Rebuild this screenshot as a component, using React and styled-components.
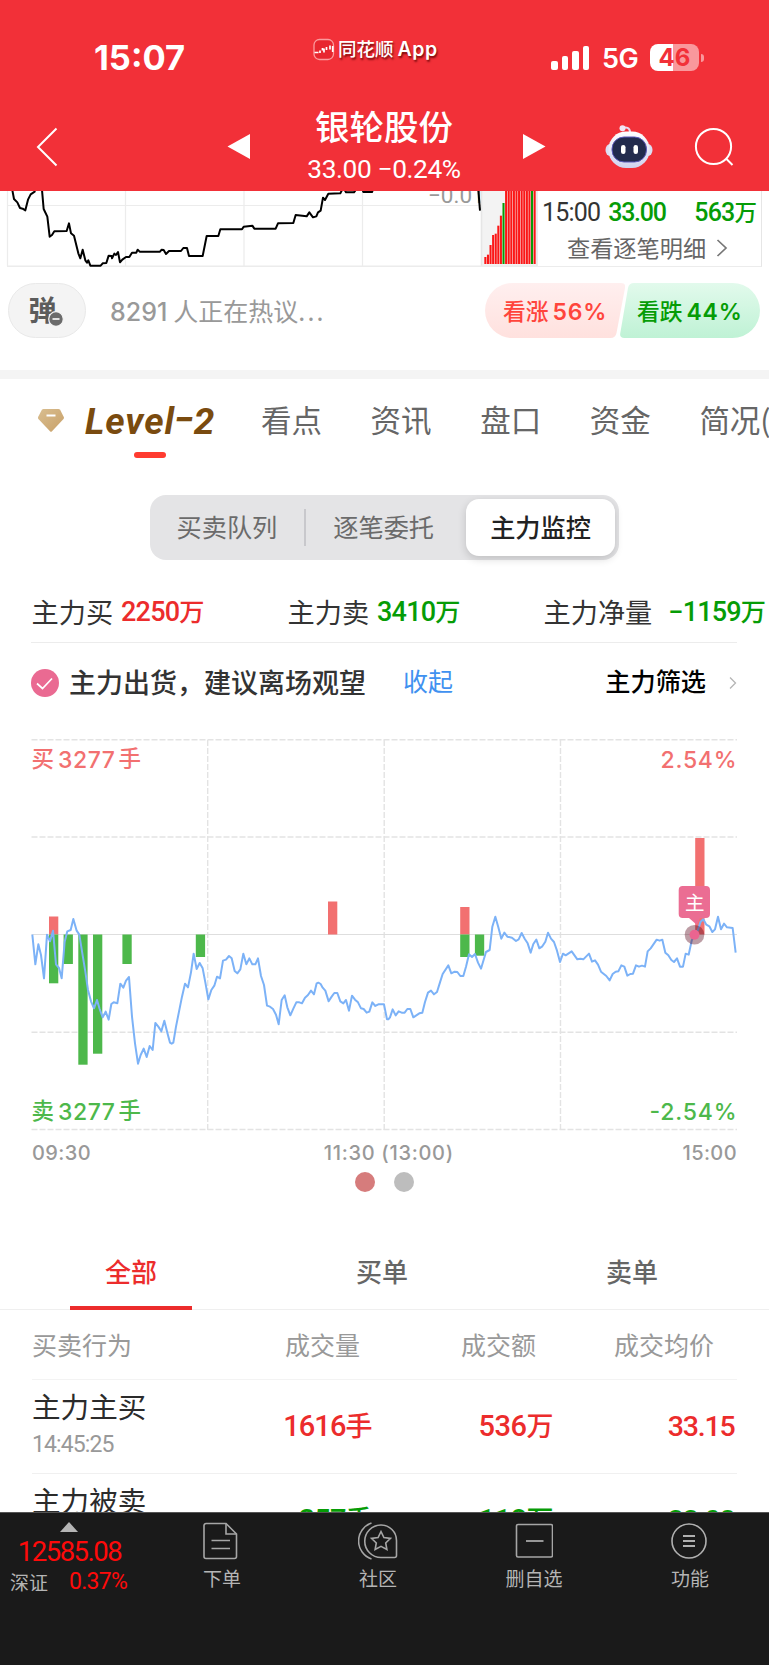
import React from 'react'
import styled, { createGlobalStyle } from 'styled-components'

const cjk = '"Noto Sans CJK SC", sans-serif'
const RED = '#f23038'
const UP = '#ec2c2c'
const DOWN = '#069c06'

const topTabs = ['看点', '资讯', '盘口', '资金', '简况(']

const summary = [
  { label: '主力买', value: '2250', unit: '万', color: UP, gap: 8, width: 256 },
  { label: '主力卖', value: '3410', unit: '万', color: DOWN, gap: 8, width: 256 },
  { label: '主力净量', value: '−1159', unit: '万', color: DOWN, gap: 16, width: 260 },
]

const orders = [
  { name: '主力主买', time: '14:45:25', volume: '1616', amount: '536', price: '33.15', color: UP },
  { name: '主力被卖', volume: '357', amount: '118', price: '33.08', color: DOWN },
]

// x, top, bottom, color
const flowBars = [
  [49, 916.5, 934.5, '#f27070'],
  [49, 934.5, 983.3, '#4db84b'],
  [63.6, 934.5, 964, '#4db84b'],
  [78.3, 934.5, 1064.7, '#4db84b'],
  [93, 934.5, 1053.7, '#4db84b'],
  [122.4, 934.5, 964, '#4db84b'],
  [195.8, 934.5, 957, '#4db84b'],
  [328, 901.5, 934.5, '#f27070'],
  [460.2, 907, 934.5, '#f27070'],
  [460.2, 934.5, 957, '#4db84b'],
  [474.9, 934.5, 955.7, '#4db84b'],
  [695.2, 838, 934.5, '#f27070'],
]

const flowLine = '97,104 106,193 115,133 123,165 132,235 141,104 150,124 159,92 168,193 177,204 185,235 194,125 202,94 212,90 220,57 230,92 238,104 247,160 256,215 264,270 273,304 282,325 291,300 299,327 308,352 317,335 326,359 334,312 341,307 352,310 361,251 370,263 378,242 387,231 396,350 405,430 414,491 422,465 431,446 440,471 449,438 458,450 466,369 475,380 484,394 493,362 502,398 510,428 515,431 520,428 528,380 537,335 546,290 555,251 564,262 573,217 581,161 590,207 599,189 608,205 616,247 625,298 634,270 643,257 651,230 660,235 669,182 678,179 687,168 695,175 704,213 712,220 721,208 730,161 739,193 748,175 757,193 766,193 774,175 783,228 792,255 801,317 810,320 819,327 828,344 836,373 845,300 854,286 862,322 871,346 880,326 889,307 898,307 906,310 915,293 924,285 933,272 942,283 950,250 955,248 962,252 968,263 976,272 986,304 995,290 1003,279 1012,279 1021,304 1030,310 1038,300 1047,332 1056,287 1065,299 1074,307 1083,325 1091,327 1100,338 1108,335 1117,307 1126,318 1135,313 1152,313 1161,358 1165,358 1170,352 1178,328 1187,346 1196,334 1205,338 1214,338 1222,327 1231,327 1240,352 1249,346 1258,340 1267,338 1275,306 1284,278 1293,272 1302,283 1311,276 1320,247 1328,222 1345,196 1354,220 1364,215 1372,216 1381,228 1390,228 1398,200 1407,163 1416,171 1425,162 1434,188 1443,206 1458,156 1469,150 1477,80 1486,50 1495,82 1504,116 1513,98 1522,110 1536,113 1548,123 1556,118 1565,99 1574,116 1583,130 1592,158 1600,132 1609,119 1618,145 1627,139 1636,125 1644,98 1653,116 1662,126 1671,152 1680,186 1689,161 1697,166 1715,154 1732,178 1741,176 1750,178 1767,161 1776,185 1785,181 1794,194 1803,215 1819,228 1829,241 1838,222 1847,215 1855,214 1864,196 1873,200 1882,227 1891,222 1899,221 1908,196 1917,200 1926,197 1935,200 1943,154 1952,145 1970,119 1979,122 1987,119 1996,158 2005,166 2014,180 2022,186 2031,175 2040,200 2049,200 2057,161 2066,164 2075,122 2084,103 2093,92 2102,65 2110,58 2119,74 2128,79 2137,96 2145,88 2154,50 2163,88 2172,71 2181,82 2198,84 2207,158'

const minuteLines = [
  '36,10 42,42 52,52 60,69 68,71 76,76 84,44 92,28 104,20 104,10',
  '126,15 131,72 142,95 149,155 156,150 163,139 200,138 207,115 213,145 222,152 235,205 241,220 248,194 256,226 261,233 265,226 271,242 302,242 308,235 319,234 326,212 335,213 336,220 343,206 348,210 354,201 360,232 367,224 378,216 388,216 396,203 409,203 413,194 419,200 480,200 485,194 491,195 498,207 507,198 543,198 550,189 561,189 567,213 608,213 620,153 655,153 661,133 726,133 731,125 757,122 763,131 827,131 834,115 880,114 887,90 920,94 928,82 939,97 949,94 954,82 962,77 969,38 975,45 985,26 1021,25 1026,15',
  '1034,15 1038,22 1062,22 1067,15',
  '1088,15 1090,21 1116,21 1119,14',
  '1435,15 1440,77',
]

const depthTops = [216, 209, 180, 150, 146, 122, 92, 54, 0, 0, 0, 0, 0, 0, 0, 0, 0, 0, 0, 0]

const MinuteChart = () => (
  <svg width="538" height="76" viewBox="0 191 538 76">
    <path d="M7.5 191V266M125.5 191V266M244 191V266M362.5 191V266M7 205.5H481" stroke="#ececec" strokeWidth="1.2" fill="none" />
    <text x="428" y="203" fontFamily="Roboto" fontSize="22.5" fill="#999">−0.01</text>
    <rect x="481" y="191" width="56" height="75" fill="#f3f3f3" />
    <path d="M481.5 191V267M537 191V267" stroke="#e6e6e6" strokeWidth="1.6" />
    <path d="M7 266.6H538" stroke="#ececec" strokeWidth="2" />
    <g transform="translate(0 185) scale(.33333)">
      {minuteLines.map((points) => (
        <polyline key={points} points={points} fill="none" stroke="#000" strokeWidth="6" strokeLinejoin="round" />
      ))}
      {depthTops.map((top, i) => (
        <rect key={i} x={1453 + i * 7.78} y={top} width="6.2" height={237 - top} fill={i === 7 || i === 18 ? '#069c06' : '#fb1616'} />
      ))}
    </g>
  </svg>
)

const FlowChart = () => (
  <svg width="769" height="400" viewBox="0 735 769 400">
    <g stroke="#e3e3e3" strokeWidth="1.4" strokeDasharray="6 2" fill="none">
      <path d="M31.5 739.7H737M31.5 837H737M31.5 1032.3H737M31.5 1129.5H737" />
      <path d="M207.7 740V1130M384.2 740V1130M560.5 740V1130" />
    </g>
    <path d="M31.5 934.5H737" stroke="#dedede" strokeWidth="1.2" />
    {flowBars.map(([x, top, bottom, color], i) => (
      <rect key={i} x={x} y={top} width="9.3" height={bottom - top} fill={color} />
    ))}
    <polyline points={flowLine} transform="translate(0 900) scale(.33333)" fill="none" stroke="#7cb2f7" strokeWidth="6" strokeLinejoin="round" />
    <circle cx="694.5" cy="934.7" r="9.8" fill="#5a0a1e" fillOpacity=".4" />
    <path d="M682.7 886h23.3a4 4 0 0 1 4 4v24a4 4 0 0 1-4 4h-6l-3 7-8-7h-6.3a4 4 0 0 1-4-4v-24a4 4 0 0 1 4-4z" fill="#eb6d93" />
    <circle cx="694.5" cy="934.7" r="5" fill="#eb6490" />
    <text x="694.8" y="910" textAnchor="middle" fontFamily={cjk} fontSize="19.5" fill="#fff">主</text>
    <g fontFamily={`Inter, ${cjk}`} fontSize="23" fontWeight="500">
      <text x="31.5" y="767" fontSize="22.5" fill="#f27070">买</text>
      <text x="58" y="767.5" fill="#f27070" textLength="57">3277</text>
      <text x="118.5" y="767" fontSize="22.5" fill="#f27070">手</text>
      <text x="736.5" y="767.5" fill="#f27070" textAnchor="end" textLength="76">2.54%</text>
      <text x="31.5" y="1119" fontSize="22.5" fill="#4db84b">卖</text>
      <text x="58" y="1119.5" fill="#4db84b" textLength="57">3277</text>
      <text x="118.5" y="1119" fontSize="22.5" fill="#4db84b">手</text>
      <text x="736.5" y="1119.5" fill="#4db84b" textAnchor="end" textLength="87">-2.54%</text>
    </g>
  </svg>
)

const Robot = () => (
  <svg width="48" height="46" viewBox="0 0 48 46">
    <defs>
      <linearGradient id="shell" x1="0" y1="0" x2="0" y2="1">
        <stop offset="0" stopColor="#fff" />
        <stop offset="1" stopColor="#d0d2ee" />
      </linearGradient>
    </defs>
    <path d="M17 4.5c4-2 8-1 8 4" stroke="#e9d9ef" strokeWidth="2" fill="none" />
    <circle cx="17.5" cy="4.2" r="3" fill="#f2e6f5" />
    <ellipse cx="5" cy="26" rx="4.5" ry="6" fill="#dddef3" />
    <ellipse cx="43" cy="26" rx="4.5" ry="6" fill="#dddef3" />
    <rect x="3.5" y="7.5" width="41" height="36.5" rx="17.5" fill="url(#shell)" />
    <rect x="7" y="13" width="34.5" height="25" rx="12" fill="#222b4d" stroke="#5a58b8" strokeWidth="1" />
    <rect x="16" y="21" width="4.5" height="9" rx="2.2" fill="#fff" />
    <rect x="28.5" y="21" width="4.5" height="9" rx="2.2" fill="#fff" />
  </svg>
)

const OrderIcon = () => (
  <svg width="38" height="38" viewBox="2 0 38 38" fill="none" stroke="#a6a6a6" strokeWidth="1.6">
    <path d="M5 1.5h20L35.5 12v22.5a2 2 0 0 1-2 2H5a2 2 0 0 1-2-2v-31a2 2 0 0 1 2-2z" />
    <path d="M25 1.5V12h10.5M10.5 18.5H29M10.5 26.5H29" />
  </svg>
)

const CommunityIcon = () => (
  <svg width="40" height="38" viewBox="0 0 40 38" fill="none" stroke="#a6a6a6" strokeWidth="1.6">
    <path d="M13.5 1A19 19 0 0 0 13.5 37" />
    <path d="M23 3a16 16 0 1 0 0 32.5h13.5a2 2 0 0 0 2-2V18.5A15.5 15.5 0 0 0 23 3z" />
    <path d="M23 9.5l2.9 6 6.6.9-4.8 4.6 1.2 6.5-5.900-3.100-5.900 3.100 1.200-6.500-4.800-4.600 6.600-.9z" />
  </svg>
)

const RemoveIcon = () => (
  <svg width="38" height="38" viewBox="0 0 38 38" fill="none" stroke="#a6a6a6" strokeWidth="1.6">
    <rect x="1.5" y="2.5" width="36" height="32.5" rx="1.5" />
    <path d="M11 19H28.5" strokeWidth="1.8" />
  </svg>
)

const MoreIcon = () => (
  <svg width="38" height="38" viewBox="0 0 38 38" fill="none" stroke="#b0b0b0" strokeWidth="1.6">
    <circle cx="18" cy="19" r="17" />
    <path d="M12 14h12M12 19h12M12 24h12" strokeWidth="2" />
  </svg>
)

const bottomTabs = [
  { label: '下单', Icon: OrderIcon },
  { label: '社区', Icon: CommunityIcon },
  { label: '删自选', Icon: RemoveIcon },
  { label: '功能', Icon: MoreIcon },
]

const App = () => {
  return (
    <Page>
      <GlobalStyle />

      <Header>
        <StatusBar>
          <Clock>15:07</Clock>
          <AppBadge>
            <svg width="22" height="23" viewBox="0 0 22 23">
              <rect x="1" y="1.5" width="19.5" height="20" rx="5.5" fill="#e8262f" stroke="#fb9a9d" strokeWidth="1.3" />
              <path d="M1.5 14.5h4M7 12.5v2.5M9.5 10v2.5M11 10.5v4M13.5 9v3M17 7.5v4M19.7 8v6" stroke="#fff" strokeWidth="1.7" />
            </svg>
            <span>同花顺<b>App</b></span>
          </AppBadge>
          <Signal>
            <i /><i /><i /><i />
          </Signal>
          <Network>5G</Network>
          <Battery><span>46</span></Battery>
          <BatteryTip />
        </StatusBar>
        <NavBar>
          <svg width="22" height="40" viewBox="0 0 22 40" fill="none" stroke="#fff" strokeWidth="2">
            <path d="M20.5 1.5L2 20l18.5 18.5" />
          </svg>
          <Arrow $left={169} viewBox="0 0 23 26"><path d="M23 0v25L.5 12.5z" fill="#fff" /></Arrow>
          <StockTitle>
            <h1>银轮股份</h1>
            <Num $size={26.3} $space={-0.4}>33.00 −0.24%</Num>
          </StockTitle>
          <Arrow $left={61} viewBox="0 0 23 26"><path d="M0 0v25l22.5-12.5z" fill="#fff" /></Arrow>
          <RobotSlot><Robot /></RobotSlot>
          <svg width="40" height="40" viewBox="0 0 40 40" fill="none" stroke="#fff" strokeWidth="2">
            <circle cx="19.5" cy="19.5" r="17.6" />
            <path d="M32 31.5l6.5 6.5" />
          </svg>
        </NavBar>
      </Header>

      <Content>
        <Strip>
          <MinuteChart />
          <Ticks>
            <TickRow>
              <Num $size={25} $space={-0.8} $color="#333">15:00</Num>
              <Num $size={25} $space={-1.3} $color={DOWN} $weight={500}>33.00</Num>
              <TickAmount><Num $size={25} $space={-0.8} $color={DOWN} $weight={500}>563</Num>万</TickAmount>
            </TickRow>
            <TickLink>
              查看逐笔明细
              <svg width="12" height="20" viewBox="0 0 12 20" fill="none" stroke="#777" strokeWidth="1.7"><path d="M1.5 2l8.5 8-8.5 8" /></svg>
            </TickLink>
          </Ticks>
        </Strip>

        <HotRow>
          <Bullet>
            <span>弹</span>
            <svg width="16" height="16" viewBox="0 0 16 16">
              <circle cx="8" cy="8" r="7.3" fill="#6b6b6b" stroke="#f4f4f4" strokeWidth="1.2" />
              <path d="M4.5 8h7" stroke="#fff" strokeWidth="1.6" />
            </svg>
          </Bullet>
          <HotText><b>8291</b>人正在热议<i>...</i></HotText>
          <Vote $bull>
            <svg width="140" height="55" viewBox="0 0 140 55">
              <defs><linearGradient id="bull" x1="0" y1="0" x2="0" y2="1"><stop offset="0" stopColor="#ffefef" /><stop offset="1" stopColor="#ffe1de" /></linearGradient></defs>
              <path d="M27.5 0H136q5 0 4 5l-8.5 45q-1 5-6 5H27.5a27.5 27.5 0 0 1 0-55z" fill="url(#bull)" />
            </svg>
            <span>看涨<b>56%</b></span>
          </Vote>
          <Vote>
            <svg width="140" height="55" viewBox="0 0 140 55">
              <defs><linearGradient id="bear" x1="0" y1="0" x2="0" y2="1"><stop offset="0" stopColor="#e2faec" /><stop offset="1" stopColor="#bff2d5" /></linearGradient></defs>
              <path d="M112.5 0H14Q9 0 8 5L.3 50q-1 5 4 5h108.2a27.5 27.5 0 0 0 0-55z" fill="url(#bear)" />
            </svg>
            <span>看跌<b>44%</b></span>
          </Vote>
        </HotRow>

        <TopTabs>
          <svg width="28" height="25" viewBox="0 0 28 25">
            <defs><linearGradient id="gem" x1="0" y1="0" x2="1" y2="1"><stop offset="0" stopColor="#d9be90" /><stop offset="1" stopColor="#c8a068" /></linearGradient></defs>
            <path d="M6.5 1h15q1 0 1.6.8l3.7 7.3q.5 1-.3 1.9L15 23.3q-1 1-2 0L1.4 11q-.8-.9-.3-1.9L4.9 1.8Q5.5 1 6.5 1z" fill="url(#gem)" />
            <path d="M9.5 7.5h9" stroke="#fff" strokeWidth="2" />
          </svg>
          <LevelTab>Level<i>−</i>2</LevelTab>
          {topTabs.map((tab) => (
            <TopTab key={tab}>{tab}</TopTab>
          ))}
        </TopTabs>

        <Segments>
          <Segment>买卖队列</Segment>
          <SegmentLine />
          <Segment $second>逐笔委托</Segment>
          <Segment $active>主力监控</Segment>
        </Segments>

        <Summary>
          {summary.map((item) => (
            <SummaryItem key={item.label} $width={item.width}>
              {item.label}
              <Value $gap={item.gap} $color={item.color}>
                <Num $size={27} $space={-0.8} $weight={500}>{item.value}</Num>{item.unit}
              </Value>
            </SummaryItem>
          ))}
        </Summary>

        <Advice>
          <svg width="28" height="28" viewBox="0 0 28 28">
            <circle cx="14" cy="14" r="14" fill="#ea6a92" />
            <path d="M6 14.5l5.5 5L21 9.5" fill="none" stroke="#fff" strokeWidth="1.7" />
          </svg>
          <AdviceText>主力出货，建议离场观望</AdviceText>
          <Collapse>收起</Collapse>
          <Filter>主力筛选</Filter>
          <svg width="8" height="14" viewBox="0 0 8 14" fill="none" stroke="#b5b5b5" strokeWidth="1.3"><path d="M1 1.5l5.5 5.5L1 12.5" /></svg>
        </Advice>

        <FlowChart />
        <TimeAxis>
          <span>09:30</span>
          <span>11:30 (13:00)</span>
          <span>15:00</span>
        </TimeAxis>
        <Dots>
          <Dot $color="#d67c7c" />
          <Dot $color="#bdbdbd" />
        </Dots>

        <OrderTabs>
          <OrderTab $active>全部</OrderTab>
          <OrderTab>买单</OrderTab>
          <OrderTab>卖单</OrderTab>
        </OrderTabs>

        <TableHead>
          <span>买卖行为</span>
          <span>成交量</span>
          <span>成交额</span>
          <span>成交均价</span>
        </TableHead>
        {orders.map((order) => (
          <OrderRow key={order.name}>
            <OrderName>
              {order.name}
              {order.time && <Num $size={23} $space={-0.9} $color="#999">{order.time}</Num>}
            </OrderName>
            <Cell $color={order.color}><Num $size={29} $space={-0.9} $weight={500}>{order.volume}</Num>手</Cell>
            <Cell $color={order.color}><Num $size={29} $space={-0.5} $weight={500}>{order.amount}</Num>万</Cell>
            <Cell $price $color={order.color}><Num $size={28.5} $space={-1.2} $weight={500}>{order.price}</Num></Cell>
          </OrderRow>
        ))}
      </Content>

      <Footer>
        <Quote>
          <svg width="18" height="10" viewBox="0 0 18 10"><path d="M9 0l9 10H0z" fill="#b5b5b5" /></svg>
          <Num $size={27.5} $space={-1.5} $color="#ff0a0a">12585.08</Num>
          <QuoteRow>深证<Num $size={23} $space={-0.7} $color="#ff0a0a">0.37%</Num></QuoteRow>
        </Quote>
        {bottomTabs.map(({ label, Icon }) => (
          <BottomTab key={label}>
            <Icon />
            {label}
          </BottomTab>
        ))}
      </Footer>
    </Page>
  )
}

export default App

const GlobalStyle = createGlobalStyle`
  * {
    box-sizing: border-box;
  }
  body {
    margin: 0;
    background: #fff;
  }
  svg {
    display: block;
    flex-shrink: 0;
  }
`
const Page = styled.div`
  display: flex;
  flex-direction: column;
  width: 769px;
  height: 1665px;
  overflow: hidden;
  background: #fff;
  font-family: ${cjk};
  line-height: 1;
  white-space: nowrap;
  color: #333;
`
const Content = styled.main`
  display: flex;
  flex-direction: column;
  height: 1321px;
  overflow: hidden;

  > * {
    flex-shrink: 0;
  }
`
const Num = styled.span`
  font-family: Roboto, sans-serif;
  font-size: ${(p) => p.$size}px;
  font-weight: ${(p) => p.$weight || 400};
  letter-spacing: ${(p) => p.$space}px;
  color: ${(p) => p.$color || 'inherit'};
`
const Header = styled.header`
  flex-shrink: 0;
  height: 191px;
  background: ${RED};
  color: #fff;
`
const StatusBar = styled.div`
  display: flex;
  align-items: center;
  height: 103px;
  padding: 12px 0 0 94px;
`
const Clock = styled.div`
  width: 219px;
  margin-top: 1px;
  font: 700 34.5px/1 Inter, sans-serif;
`
const AppBadge = styled.div`
  display: flex;
  align-items: center;
  gap: 3px;
  width: 238px;
  margin-top: -16px;
  font-size: 18.5px;
  font-weight: 500;
  text-shadow: 1px 2px 2px rgba(90, 0, 0, 0.8);

  b {
    margin-left: 4px;
    font: 600 19.5px/1 Inter, sans-serif;
    letter-spacing: 0.6px;
  }
`
const Signal = styled.div`
  display: flex;
  align-items: flex-end;
  gap: 4px;
  width: 51px;
  height: 24px;

  i {
    width: 6.5px;
    border-radius: 2px;
    background: #fff;
  }
  i:nth-child(1) { height: 9px; }
  i:nth-child(2) { height: 14px; }
  i:nth-child(3) { height: 19px; }
  i:nth-child(4) { height: 24px; }
`
const Network = styled.div`
  width: 48px;
  margin-top: 2px;
  font: 600 27px/1 Inter, sans-serif;
  letter-spacing: -0.5px;
`
const Battery = styled.div`
  width: 49px;
  height: 27px;
  border-radius: 8px;
  background: linear-gradient(90deg, #fff 47%, #f9989c 47%);
  color: ${RED};
  font: 700 24px/27px Inter, sans-serif;
  text-align: center;
`
const BatteryTip = styled.div`
  width: 3px;
  height: 8px;
  margin-left: 2px;
  border-radius: 0 3px 3px 0;
  background: #f9989c;
`
const NavBar = styled.div`
  display: flex;
  align-items: center;
  height: 88px;
  padding: 0 0 0 36px;
`
const Arrow = styled.svg`
  width: 23px;
  height: 26px;
  margin-left: ${(p) => p.$left}px;
`
const StockTitle = styled.div`
  display: flex;
  flex-direction: column;
  align-items: center;
  width: 156px;
  margin-left: 56px;
  margin-top: -5px;

  h1 {
    margin: 0 0 13px;
    font-size: 34.5px;
    font-weight: 500;
    line-height: 36px;
  }
`
const RobotSlot = styled.div`
  margin: 0 41px 0 59px;
`
const Strip = styled.div`
  display: flex;
  height: 76px;
`
const Ticks = styled.div`
  width: 224px;
  padding: 9px 4px 0 4px;
  border-right: 1.5px solid #e6e6e6;
  border-bottom: 1.5px solid #ececec;
`
const TickRow = styled.div`
  display: flex;
  align-items: baseline;
  gap: 8px;
`
const TickAmount = styled.span`
  margin-left: auto;
  font-size: 22.5px;
  font-weight: 500;
  color: ${DOWN};
`
const TickLink = styled.div`
  display: flex;
  align-items: center;
  gap: 10px;
  margin: 11px 0 0 25px;
  font-size: 23.2px;
  color: #666;
`
const HotRow = styled.div`
  display: flex;
  height: 112px;
  padding: 16px 0 0 8px;
  border-bottom: 9px solid #f4f4f4;
`
const Bullet = styled.div`
  display: flex;
  align-items: center;
  justify-content: center;
  width: 78px;
  height: 55px;
  padding-right: 7px;
  border: 1.5px solid #e9e9e9;
  border-radius: 28px;
  background: #f4f4f4;
  font-size: 28px;
  font-weight: 700;
  color: #5c5c5c;

  span {
    margin-top: -4px;
  }
  svg {
    margin: 17px -5px 0 -9px;
  }
`
const HotText = styled.div`
  width: 375px;
  margin-left: 24px;
  font-size: 25px;
  line-height: 54px;
  color: #999;

  b {
    margin-right: 6px;
    font: 500 25px/1 Inter, sans-serif;
  }
  i {
    font-style: normal;
    letter-spacing: 2.2px;
  }
`
const Vote = styled.div`
  display: grid;
  width: 140px;
  height: 55px;
  margin-left: ${(p) => (p.$bull ? 0 : -5)}px;
  font-size: 22.8px;
  font-weight: 500;
  line-height: 55px;
  color: ${(p) => (p.$bull ? '#ff453c' : DOWN)};

  > * {
    grid-area: 1 / 1;
  }
  span {
    padding-left: ${(p) => (p.$bull ? 18 : 17)}px;
  }
  b {
    margin-left: 4px;
    font: 600 23px/1 Inter, sans-serif;
    letter-spacing: 0.7px;
  }
`
const TopTabs = styled.nav`
  display: flex;
  height: 116px;
  padding: 0 0 0 37px;

  > svg {
    margin-top: 29px;
  }
`
const LevelTab = styled.div`
  flex-shrink: 0;
  width: 134px;
  height: 79px;
  margin: 0 42px 0 20px;
  font: italic 700 37px/86px Roboto, sans-serif;
  letter-spacing: 0.9px;
  color: #7a4b0f;

  i {
    display: inline-block;
    transform: translateY(-2px);
    margin: 0 -1px;
  }
  &::after {
    content: '';
    display: block;
    width: 32px;
    height: 6px;
    margin: -13px 0 0 49px;
    border-radius: 3px;
    background: #ff3b30;
  }
`
const TopTab = styled.div`
  flex-shrink: 0;
  margin-right: 48.6px;
  font-size: 30.5px;
  line-height: 81px;
  color: #666;
`
const Segments = styled.div`
  display: flex;
  align-items: center;
  align-self: flex-start;
  width: 469px;
  height: 65px;
  margin-left: 150px;
  padding-left: 26.5px;
  border-radius: 16px;
  background: #e4e4e6;
`
const SegmentLine = styled.div`
  width: 2px;
  height: 37px;
  margin-left: 27px;
  background: #c8c8cc;
`
const Segment = styled.div`
  margin-top: -2px;
  margin-left: ${(p) => (p.$second ? 27 : 0)}px;
  font-size: 25.2px;
  color: #6b6b6b;

  ${(p) => p.$active && `
    width: 149px;
    height: 57px;
    margin-top: 0;
    margin-left: 32px;
    border-radius: 13px;
    background: #fff;
    box-shadow: 0 3px 8px rgba(0, 0, 0, 0.16);
    color: #222;
    font-weight: 500;
    line-height: 54px;
    text-align: center;
  `}
`
const Summary = styled.div`
  display: flex;
  height: 83px;
  margin: 0 0 0 31px;
  padding: 38px 0 0 0.5px;
  background: linear-gradient(#ececec, #ececec) 0 100% / 706px 1.5px no-repeat;
`
const SummaryItem = styled.div`
  display: flex;
  flex-shrink: 0;
  width: ${(p) => p.$width}px;
  font-size: 27.2px;
`
const Value = styled.div`
  margin: 0 0 0 ${(p) => p.$gap}px;
  font-size: 25.2px;
  font-weight: 500;
  color: ${(p) => p.$color};
`
const Advice = styled.div`
  display: flex;
  align-items: center;
  height: 79px;
  padding: 0 32px 0 31px;
  margin-bottom: 13px;
`
const AdviceText = styled.div`
  width: 334px;
  margin: -3px 0 0 10px;
  font-size: 27px;
  font-weight: 500;
`
const Collapse = styled.div`
  margin-top: -4px;
  font-size: 25px;
  color: #4091f0;
`
const Filter = styled.div`
  margin: -3px 23px 0 auto;
  font-size: 25.2px;
  font-weight: 500;
  color: #000;
`
const TimeAxis = styled.div`
  display: flex;
  justify-content: space-between;
  height: 37px;
  padding: 8px 32px 0;
  font: 500 20px/20px Inter, sans-serif;
  letter-spacing: 0.4px;
  color: #999;

  span:nth-child(2) {
    margin-left: 4px;
    letter-spacing: 0.7px;
  }
`
const Dots = styled.div`
  display: flex;
  justify-content: center;
  gap: 19px;
  height: 54px;
`
const Dot = styled.div`
  width: 20px;
  height: 20px;
  border-radius: 50%;
  background: ${(p) => p.$color};
`
const OrderTabs = styled.div`
  display: grid;
  grid-template-columns: 262px 240px 260px;
  height: 84px;
  border-bottom: 1.5px solid #efefef;
`
const OrderTab = styled.div`
  font-size: 26px;
  font-weight: 500;
  line-height: 89px;
  text-align: center;
  color: ${(p) => (p.$active ? UP : '#666')};

  &::after {
    content: '';
    display: ${(p) => (p.$active ? 'block' : 'none')};
    width: 122px;
    height: 4px;
    margin: -9px auto 0;
    background: ${UP};
  }
`
const TableHead = styled.div`
  display: grid;
  grid-template-columns: 253px 176px 153px 123px;
  height: 70px;
  margin: 0 32px;
  border-bottom: 1.5px solid #f3f3f3;
  font-size: 25px;
  line-height: 69px;
  color: #999;
`
const OrderRow = styled.div`
  display: grid;
  grid-template-columns: 160px 180.5px 181px 183px;
  height: 94px;
  margin: 0 32px;
  border-bottom: 1.5px solid #f0f0f0;
`
const OrderName = styled.div`
  display: flex;
  flex-direction: column;
  gap: 12px;
  padding-top: 12px;
  font-size: 28.6px;
  color: #2b2b2b;
`
const Cell = styled.div`
  padding-right: ${(p) => (p.$price ? 2 : 0)}px;
  font-size: 27px;
  font-weight: 500;
  line-height: 89px;
  text-align: right;
  color: ${(p) => p.$color};
`
const Footer = styled.footer`
  display: flex;
  width: 769px;
  height: 153px;
  border-top: 1px solid #555;
  background: #1a1a1a;
  color: #b5b5b5;
`
const Quote = styled.div`
  display: flex;
  flex-direction: column;
  align-items: center;
  width: 144px;
  padding: 9px 7px 0 0;

  > span {
    margin: 6px 0 0 2px;
  }
`
const QuoteRow = styled.div`
  display: flex;
  align-items: center;
  gap: 21px;
  margin-top: 4px;
  font-size: 19px;
`
const BottomTab = styled.div`
  display: flex;
  flex-direction: column;
  align-items: center;
  gap: 8px;
  width: 156px;
  padding-top: 9px;
  font-size: 19px;
`
